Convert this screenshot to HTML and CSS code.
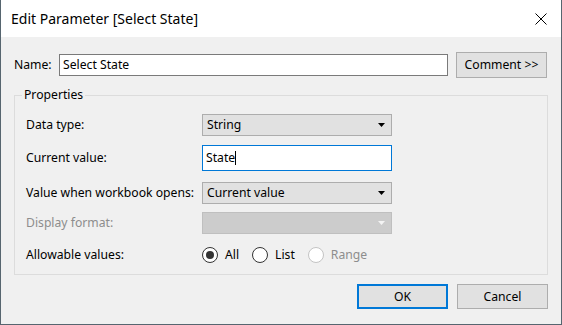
FILE: index.html
```html
<!DOCTYPE html>
<html>
<head>
<meta charset="utf-8">
<link rel="stylesheet" href="styles.css">
</head>
<body>
<div class="window">
  <div class="titlebar">
    <span class="title">Edit Parameter [Select State]</span>
    <svg class="close" width="12" height="12" viewBox="0 0 12 12"><path d="M0.5 0.5L11.5 11.5M11.5 0.5L0.5 11.5" stroke="#000" stroke-width="1" fill="none"/></svg>
  </div>
  <div class="content">
    <div class="name-row">
      <span class="name-label">Name:</span>
      <div class="textbox name-box">Select State</div>
      <div class="btn">Comment &gt;&gt;</div>
    </div>
    <fieldset class="group">
      <legend class="group-title">Properties</legend>
      <div class="row">
        <span class="label">Data type:</span>
        <div class="combo"><span>String</span><svg class="arrow" width="7" height="4" viewBox="0 0 7 4"><path d="M0 0H7L3.5 4Z" fill="#000"/></svg></div>
      </div>
      <div class="row row-edit">
        <span class="label">Current value:</span>
        <div class="textbox focus-box"><span>State</span><span class="caret"></span></div>
      </div>
      <div class="row">
        <span class="label">Value when workbook opens:</span>
        <div class="combo"><span>Current value</span><svg class="arrow" width="7" height="4" viewBox="0 0 7 4"><path d="M0 0H7L3.5 4Z" fill="#000"/></svg></div>
      </div>
      <div class="row row-disabled">
        <span class="label">Display format:</span>
        <div class="combo combo-disabled"><span></span><svg class="arrow" width="7" height="4" viewBox="0 0 7 4"><path d="M0 0H7L3.5 4Z" fill="#f4f4f4"/></svg></div>
      </div>
      <div class="row row-radios">
        <span class="label">Allowable values:</span>
        <div class="radios">
          <div class="radio-item"><span class="radio checked"><span class="dot"></span></span><span>All</span></div>
          <div class="radio-item"><span class="radio"></span><span>List</span></div>
          <div class="radio-item disabled"><span class="radio"></span><span>Range</span></div>
        </div>
      </div>
    </fieldset>
    <div class="actions">
      <div class="btn btn-default">OK</div>
      <div class="btn">Cancel</div>
    </div>
  </div>
</div>
</body>
</html>
```
FILE: styles.css
```css
* { box-sizing: border-box; }
html, body { margin: 0; padding: 0; }
body {
  font-family: "Noto Sans", "Open Sans", sans-serif;
  font-size: 12.2px;
  color: #000;
  background: #f0f0f0;
}
.window {
  width: 562px;
  height: 325px;
  background: #f0f0f0;
  border-left: 1px solid #56656f;
  border-right: 1px solid #56656f;
  border-bottom: 1px solid #56656f;
  display: flex;
  flex-direction: column;
}
.titlebar {
  height: 37px;
  background: #fff;
  display: flex;
  align-items: center;
  padding: 1px 14px 0 10px;
}
.title {
  font-size: 14px;
  line-height: 18px;
  flex: 1;
}
.close { display: block; margin-top: -1px; }
.content {
  padding: 0 13px;
  display: flex;
  flex-direction: column;
}
.name-row {
  margin-top: 15px;
  height: 26px;
  display: flex;
  align-items: center;
}
.name-label {
  width: 45px;
  line-height: 16px;
}
.textbox {
  background: #fff;
  border: 1px solid #7a7a7a;
  height: 22px;
  display: flex;
  align-items: center;
  padding-left: 3px;
  line-height: 16px;
}
.name-box { width: 389px; margin-right: 8px; }
.btn {
  width: 91px;
  height: 26px;
  background: #e1e1e1;
  border: 1px solid #adadad;
  display: flex;
  align-items: center;
  justify-content: center;
  line-height: 16px;
}
.group {
  margin: 9px 0 0;
  padding: 11px 11px 9px;
  border: 1px solid #dcdcdc;
  min-width: 0;
}
.group-title {
  padding: 0 2px;
  margin-left: -4px;
  line-height: 16px;
}
.row {
  display: flex;
  align-items: center;
  height: 22px;
}
.row + .row { margin-top: 8px; }
.row-edit { height: 26px; margin-top: 9px !important; }
.row-edit + .row { margin-top: 11px; }
.row-radios { height: 21px; margin-top: 10px !important; }
.label {
  width: 176px;
  line-height: 16px;
}
.row-disabled .label { color: #8d8d8d; }
.combo {
  width: 190px;
  height: 22px;
  background: #e1e1e1;
  border: 1px solid #adadad;
  display: flex;
  align-items: center;
  justify-content: space-between;
  padding: 0 6px 0 4px;
  line-height: 16px;
}
.combo-disabled {
  background: #cccccc;
  border-color: #bfbfbf;
}
.arrow { display: block; }
.focus-box {
  width: 190px;
  height: 26px;
  border-color: #0078d7;
  padding-left: 3px;
}
.caret {
  display: inline-block;
  width: 1px;
  height: 14px;
  background: #000;
  margin-left: 0;
}
.radios {
  display: flex;
  align-items: center;
  gap: 13px;
}
.radio-item {
  display: flex;
  align-items: center;
  line-height: 16px;
}
.radio {
  width: 16px;
  height: 16px;
  border-radius: 50%;
  border: 1px solid #333;
  background: #fff;
  margin-right: 7px;
  display: flex;
  align-items: center;
  justify-content: center;
}
.dot {
  width: 8px;
  height: 8px;
  border-radius: 50%;
  background: #333;
}
.radio-item.disabled { color: #8d8d8d; }
.radio-item.disabled .radio { border-color: #c4c4c4; }
.actions {
  margin-top: 9px;
  display: flex;
  justify-content: flex-end;
  gap: 9px;
}
.actions .btn { height: 25px; }
.btn-default {
  border: 2px solid #0078d7;
}
```
